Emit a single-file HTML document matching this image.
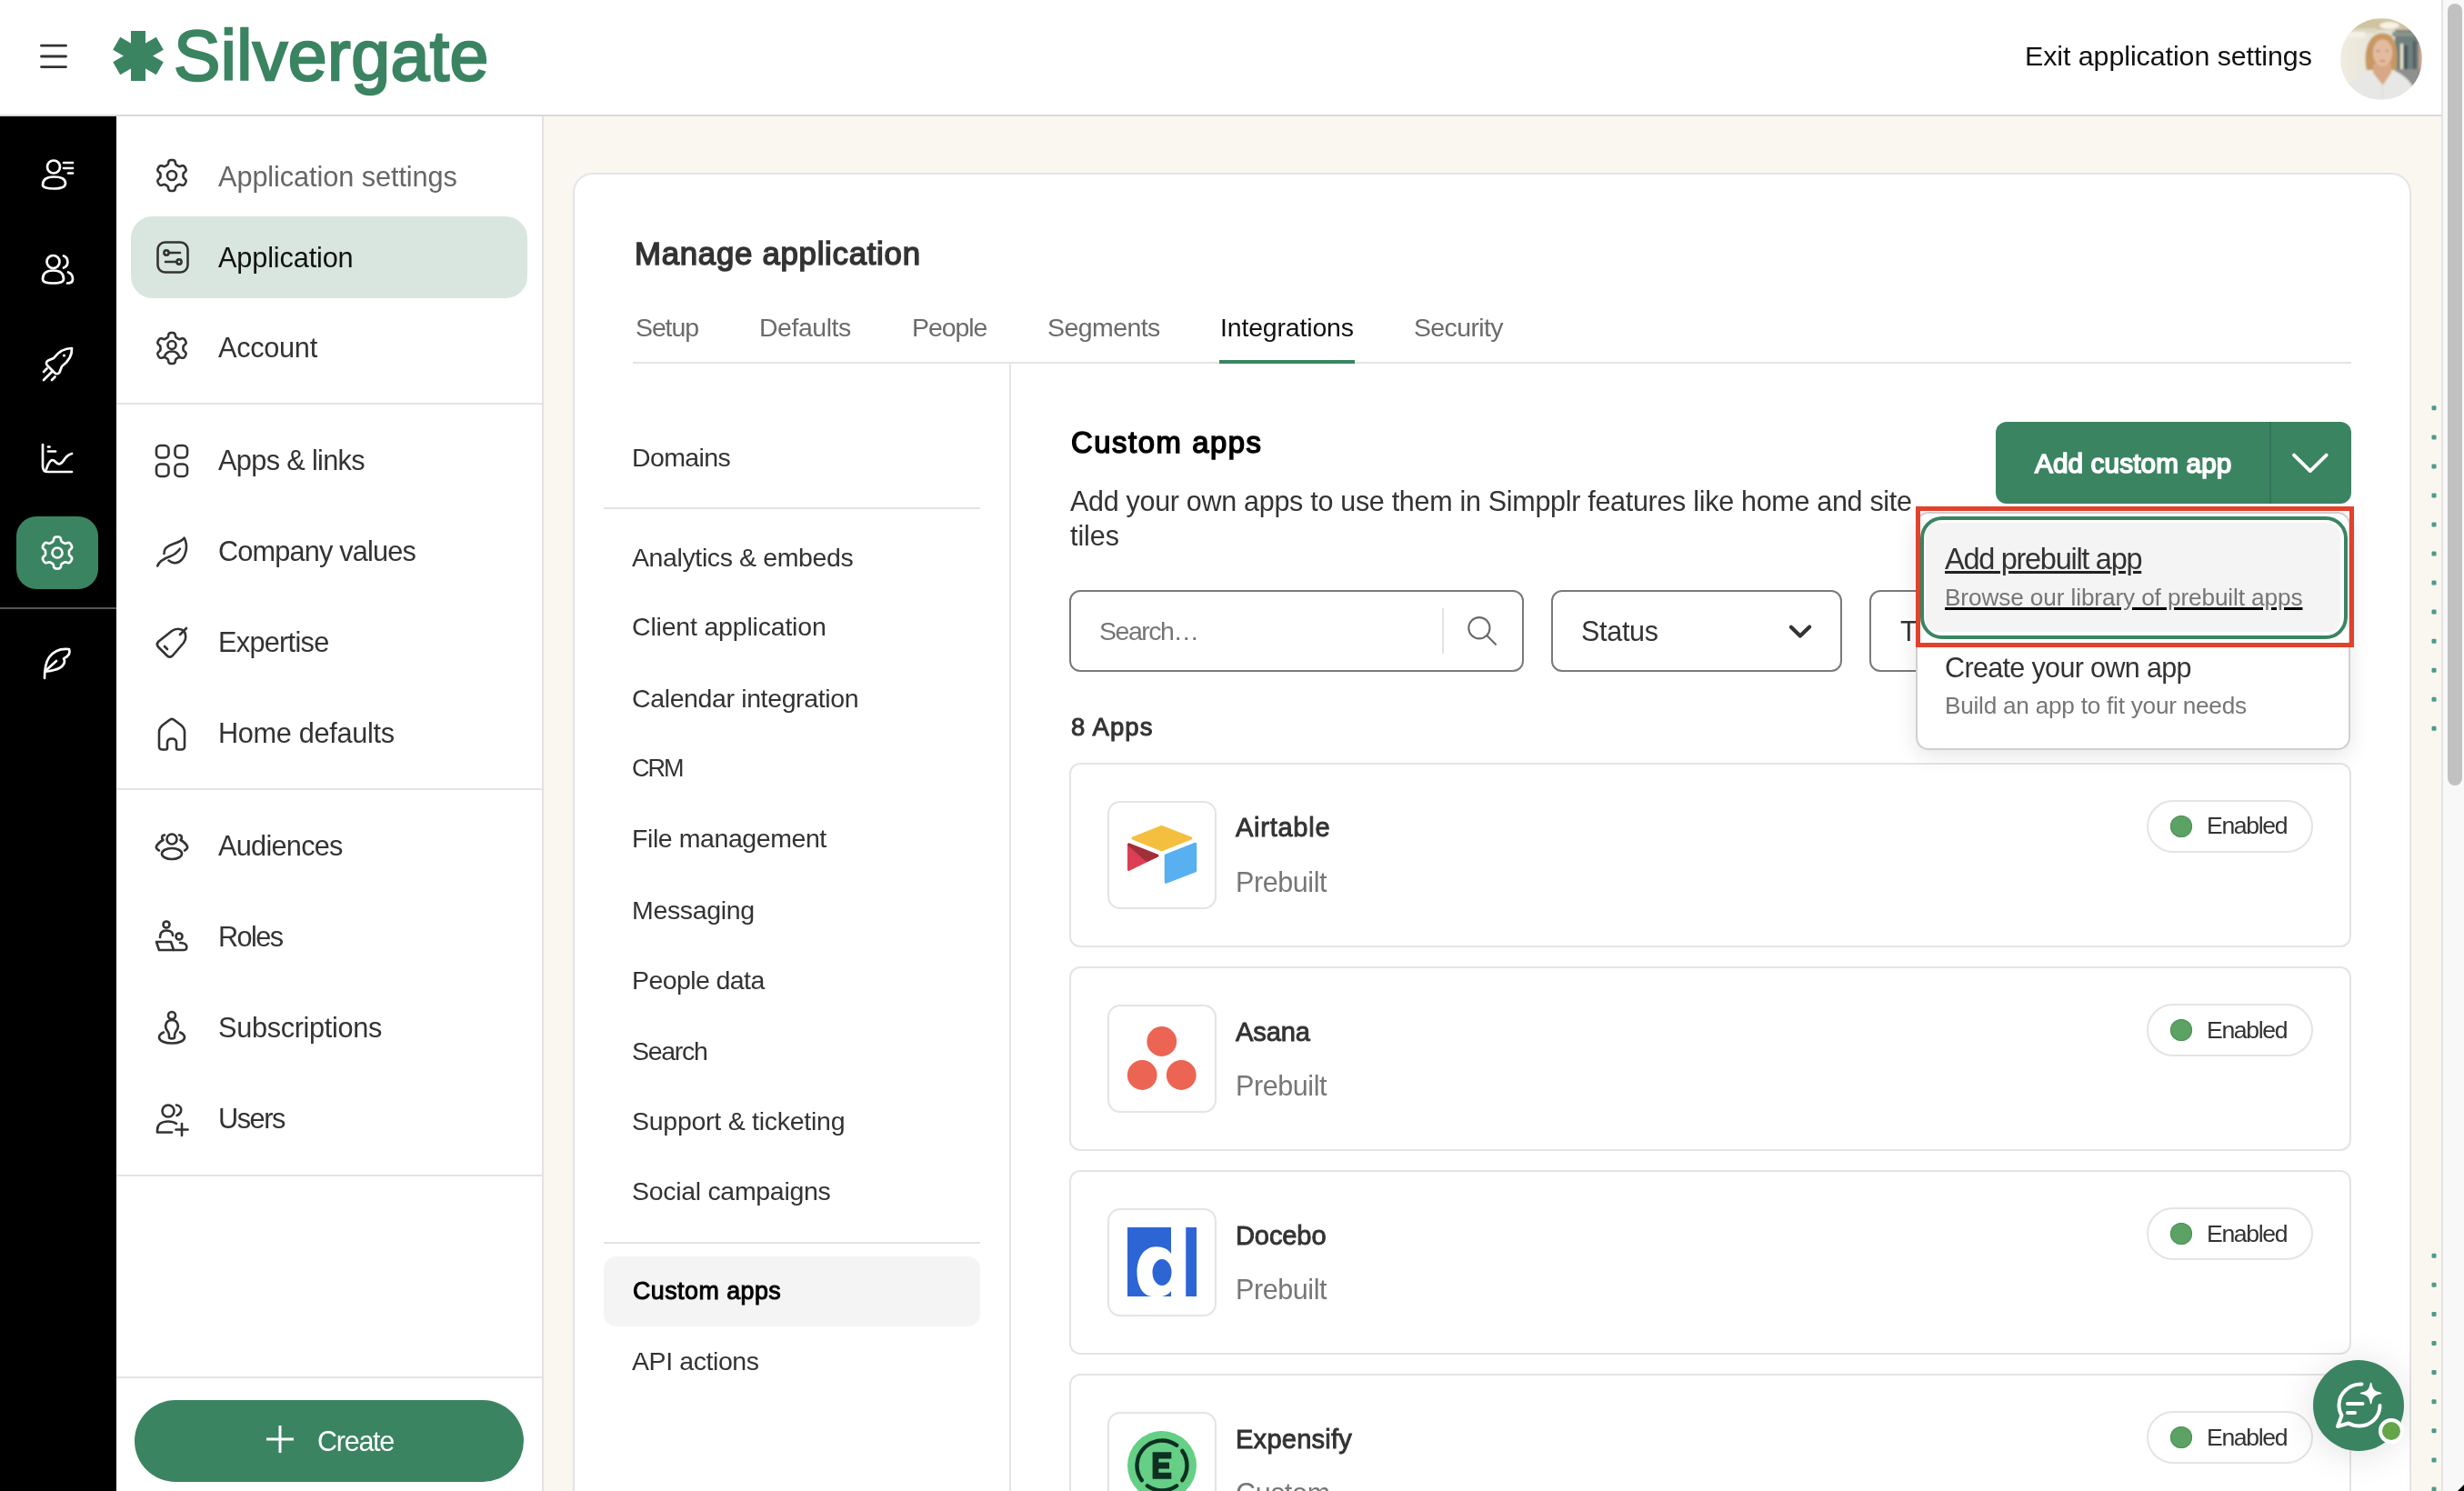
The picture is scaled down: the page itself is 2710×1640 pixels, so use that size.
<!DOCTYPE html>
<html><head><meta charset="utf-8"><title>Manage application</title>
<style>
html,body{margin:0;padding:0;width:2710px;height:1640px;overflow:hidden;background:#fff}
body{position:relative;font-family:"Liberation Sans",sans-serif}
.a{position:absolute;display:block}
.t{position:absolute;line-height:1;white-space:nowrap;will-change:transform}
</style></head><body>
<div class="a" style="left:598px;top:128px;width:2087px;height:1512px;background:#f9f7f0"></div>
<div class="a" style="left:0px;top:0px;width:2685px;height:126px;background:#fff"></div>
<div class="a" style="left:0px;top:126px;width:2685px;height:2px;background:#d9d9d9"></div>
<div class="a" style="left:0px;top:128px;width:128px;height:1512px;background:#000"></div>
<div class="a" style="left:128px;top:128px;width:468px;height:1512px;background:#fff"></div>
<div class="a" style="left:596px;top:128px;width:2px;height:1512px;background:#e2e2e2"></div>
<div class="a" style="left:2685px;top:0px;width:2px;height:1640px;background:#e4e4e4"></div>
<div class="a" style="left:2687px;top:0px;width:23px;height:1640px;background:#f8f8f8"></div>
<div class="a" style="left:2692px;top:4px;width:16px;height:860px;background:#c1c1c1;border-radius:8px"></div>
<svg class="a" style="left:40px;top:44px;" width="38" height="36" viewBox="0 0 38 36"><g stroke="#333" stroke-width="2.8" stroke-linecap="round"><line x1="5.5" y1="6.2" x2="32.5" y2="6.2"/><line x1="5.5" y1="18" x2="32.5" y2="18"/><line x1="5.5" y1="29.6" x2="32.5" y2="29.6"/></g></svg>
<svg class="a" style="left:122px;top:32px;" width="60" height="60" viewBox="0 0 60 60"><g fill="#3b8462" transform="translate(30 29.5)"><rect x="-8" y="-27.5" width="16" height="55"/><rect x="-8" y="-27.5" width="16" height="55" transform="rotate(60)"/><rect x="-8" y="-27.5" width="16" height="55" transform="rotate(120)"/></g></svg>
<div class="t " style="left:191.00px;top:23.10px;font-size:77px;color:#3b8462;font-weight:400;letter-spacing:0.433px;-webkit-text-stroke:2.4px #3b8462">Silvergate</div>
<div class="t " style="left:2227.00px;top:46.46px;font-size:30.4px;color:#111;font-weight:400;letter-spacing:-0.071px;">Exit application settings</div>
<svg class="a" style="left:2574px;top:20px" width="90" height="90" viewBox="0 0 90 90">
<defs><clipPath id="avc"><circle cx="45" cy="45" r="45"/></clipPath>
<filter id="avb" x="-5%" y="-5%" width="110%" height="110%"><feGaussianBlur stdDeviation="1.3"/></filter>
<linearGradient id="avl" x1="0" y1="0" x2="1" y2="0"><stop offset="0" stop-color="#efece0"/><stop offset="1" stop-color="#dedbcd"/></linearGradient></defs>
<g clip-path="url(#avc)"><g filter="url(#avb)">
<rect width="90" height="90" fill="url(#avl)"/>
<rect x="0" y="0" width="90" height="13" fill="#cfc3a0"/>
<rect x="0" y="11" width="40" height="5" fill="#ddd6bf"/>
<ellipse cx="54" cy="8" rx="11" ry="4" fill="#f6f3e4"/>
<rect x="5" y="15" width="22" height="6" fill="#f4f2e8"/>
<path d="M60 13 L90 13 L90 90 L60 90Z" fill="#6e7f7e"/>
<rect x="57" y="15" width="33" height="5" fill="#8a9588"/>
<rect x="66" y="28" width="3" height="34" fill="#e8e2c8"/>
<rect x="70" y="30" width="4" height="32" fill="#45575a"/>
<rect x="80" y="25" width="3" height="37" fill="#4b5d61"/>
<rect x="86" y="28" width="4" height="30" fill="#c9a38e"/>
<rect x="60" y="56" width="30" height="20" fill="#8e908d"/>
<path d="M29 57 C25 40 29 17 46 16.5 C61 16.5 64 32 62 57 Z" fill="#c69760"/>
<path d="M36 50 L56 50 L56 60 L46.7 74 L36 60Z" fill="#d8a786"/>
<ellipse cx="46.5" cy="38" rx="10.8" ry="15" fill="#e3bb9f"/>
<path d="M34 36 C33 22 38 17.5 47 17.5 C56 17.5 60 23 59 36 C56.5 27 51 23 45.5 23 C40 23 36 28 34 36Z" fill="#c8995f"/>
<circle cx="41.5" cy="36" r="1.1" fill="#6b6f80"/><circle cx="51.5" cy="36" r="1.1" fill="#6b6f80"/>
<ellipse cx="46.5" cy="47" rx="3.4" ry="1.1" fill="#c78b82"/>
<path d="M6 90 L10 73 C17 66 26 60 33 57.5 L46.7 74 L58 57.5 C66 60 74 66 79 74 L84 90Z" fill="#e7e7e5"/>
<line x1="46.7" y1="74" x2="46.7" y2="90" stroke="#d4d4d2" stroke-width="0.8"/>
</g></g></svg>
<svg class="a" style="left:40px;top:170px;" width="46" height="44" viewBox="0 0 46 44"><g fill="none" stroke="#fff" stroke-width="2.7" stroke-linecap="round"><circle cx="19" cy="13.5" r="7"/><path d="M7 33.5 C7 26 13 24.5 19 24.5 C25 24.5 32 26 32 31.5 C32 36 26 37.5 19 37.5 C12 37.5 7 36 7 33.5Z"/><line x1="30" y1="9" x2="40" y2="9"/><line x1="30" y1="15" x2="40" y2="15"/><line x1="35" y1="20.5" x2="40" y2="20.5"/></g></svg>
<svg class="a" style="left:40px;top:275px;" width="46" height="44" viewBox="0 0 46 44"><g fill="none" stroke="#fff" stroke-width="2.7" stroke-linecap="round"><circle cx="18.5" cy="13" r="7"/><path d="M30 6.5 A7 7 0 0 1 30 19.5"/><path d="M7 32 C7 25 12 22.5 18.5 22.5 C25 22.5 30 25 30 32 C30 35.5 26 36.5 18.5 36.5 C11 36.5 7 35.5 7 32Z"/><path d="M35 24.5 C39 26 40 29 40 32 C40 35 38 36.5 34 36.5"/></g></svg>
<svg class="a" style="left:40px;top:378px;" width="46" height="44" viewBox="0 0 46 44"><g fill="none" stroke="#fff" stroke-width="2.7" stroke-linecap="round" stroke-linejoin="round"><path d="M13 18.5 L19 16 C25 8 31 5 39 5 C39.5 13 36 19 28 25 L25.5 31.5 C24 34 21.5 33.5 20 32 L12 24 C10.5 22.5 10.5 19.5 13 18.5Z"/><circle cx="30.5" cy="13" r="1.6" fill="#fff" stroke="none"/><line x1="8" y1="40" x2="17" y2="31"/><line x1="8" y1="31" x2="11.5" y2="27.5"/><line x1="17" y1="40" x2="20.5" y2="36.5"/></g></svg>
<svg class="a" style="left:40px;top:483px;" width="46" height="44" viewBox="0 0 46 44"><g fill="none" stroke="#fff" stroke-width="2.7" stroke-linecap="round" stroke-linejoin="round"><path d="M7 6 L7 30 C7 34 9 36 13 36 L39 36"/><line x1="13" y1="8.5" x2="14.5" y2="8.5"/><line x1="13" y1="13.5" x2="21" y2="13.5"/><path d="M11 33 C14 24 17 20.5 21 25 C25 29.5 28 27 31 22 C33 19 35 17 39 16"/></g></svg>
<div class="a" style="left:18px;top:568px;width:90px;height:80px;background:#3b8462;border-radius:22px"></div>
<svg class="a" style="left:40px;top:585px;" width="46" height="46" viewBox="0 0 46 46"><path d="M36.00 23.00 L36.00 23.34 L36.00 23.68 L35.99 24.02 L36.00 24.37 L36.03 24.72 L36.10 25.08 L36.27 25.46 L36.58 25.89 L37.09 26.38 L37.73 26.95 L38.35 27.55 L38.80 28.13 L39.03 28.68 L39.09 29.18 L39.04 29.64 L38.92 30.09 L38.76 30.52 L38.58 30.94 L38.38 31.35 L38.16 31.75 L37.92 32.14 L37.67 32.52 L37.39 32.89 L37.10 33.24 L36.77 33.57 L36.39 33.85 L35.93 34.04 L35.35 34.12 L34.62 34.02 L33.78 33.78 L32.97 33.51 L32.29 33.32 L31.76 33.26 L31.35 33.31 L31.00 33.43 L30.68 33.58 L30.38 33.74 L30.09 33.91 L29.79 34.09 L29.50 34.26 L29.20 34.43 L28.91 34.59 L28.61 34.76 L28.32 34.94 L28.03 35.14 L27.75 35.39 L27.50 35.72 L27.29 36.21 L27.11 36.89 L26.95 37.73 L26.74 38.57 L26.45 39.25 L26.10 39.72 L25.70 40.02 L25.27 40.21 L24.82 40.33 L24.37 40.41 L23.92 40.46 L23.46 40.49 L23.00 40.50 L22.54 40.49 L22.08 40.46 L21.63 40.41 L21.18 40.33 L20.73 40.21 L20.30 40.02 L19.90 39.72 L19.55 39.25 L19.26 38.57 L19.05 37.73 L18.89 36.89 L18.71 36.21 L18.50 35.72 L18.25 35.39 L17.97 35.14 L17.68 34.94 L17.39 34.76 L17.09 34.59 L16.80 34.43 L16.50 34.26 L16.21 34.09 L15.91 33.91 L15.62 33.74 L15.32 33.58 L15.00 33.43 L14.65 33.31 L14.24 33.26 L13.71 33.32 L13.03 33.51 L12.22 33.78 L11.38 34.02 L10.65 34.12 L10.07 34.04 L9.61 33.85 L9.23 33.57 L8.90 33.24 L8.61 32.89 L8.33 32.52 L8.08 32.14 L7.84 31.75 L7.62 31.35 L7.42 30.94 L7.24 30.52 L7.08 30.09 L6.96 29.64 L6.91 29.18 L6.97 28.68 L7.20 28.13 L7.65 27.55 L8.27 26.95 L8.91 26.38 L9.42 25.89 L9.73 25.46 L9.90 25.08 L9.97 24.72 L10.00 24.37 L10.01 24.02 L10.00 23.68 L10.00 23.34 L10.00 23.00 L10.00 22.66 L10.00 22.32 L10.01 21.98 L10.00 21.63 L9.97 21.28 L9.90 20.92 L9.73 20.54 L9.42 20.11 L8.91 19.62 L8.27 19.05 L7.65 18.45 L7.20 17.87 L6.97 17.32 L6.91 16.82 L6.96 16.36 L7.08 15.91 L7.24 15.48 L7.42 15.06 L7.62 14.65 L7.84 14.25 L8.08 13.86 L8.33 13.48 L8.61 13.11 L8.90 12.76 L9.23 12.43 L9.61 12.15 L10.07 11.96 L10.65 11.88 L11.38 11.98 L12.22 12.22 L13.03 12.49 L13.71 12.68 L14.24 12.74 L14.65 12.69 L15.00 12.57 L15.32 12.42 L15.62 12.26 L15.91 12.09 L16.21 11.91 L16.50 11.74 L16.80 11.57 L17.09 11.41 L17.39 11.24 L17.68 11.06 L17.97 10.86 L18.25 10.61 L18.50 10.28 L18.71 9.79 L18.89 9.11 L19.05 8.27 L19.26 7.43 L19.55 6.75 L19.90 6.28 L20.30 5.98 L20.73 5.79 L21.18 5.67 L21.63 5.59 L22.08 5.54 L22.54 5.51 L23.00 5.50 L23.46 5.51 L23.92 5.54 L24.37 5.59 L24.82 5.67 L25.27 5.79 L25.70 5.98 L26.10 6.28 L26.45 6.75 L26.74 7.43 L26.95 8.27 L27.11 9.11 L27.29 9.79 L27.50 10.28 L27.75 10.61 L28.03 10.86 L28.32 11.06 L28.61 11.24 L28.91 11.41 L29.20 11.57 L29.50 11.74 L29.79 11.91 L30.09 12.09 L30.38 12.26 L30.68 12.42 L31.00 12.57 L31.35 12.69 L31.76 12.74 L32.29 12.68 L32.97 12.49 L33.78 12.22 L34.62 11.98 L35.35 11.88 L35.93 11.96 L36.39 12.15 L36.77 12.43 L37.10 12.76 L37.39 13.11 L37.67 13.48 L37.92 13.86 L38.16 14.25 L38.38 14.65 L38.58 15.06 L38.76 15.48 L38.92 15.91 L39.04 16.36 L39.09 16.82 L39.03 17.32 L38.80 17.87 L38.35 18.45 L37.73 19.05 L37.09 19.62 L36.58 20.11 L36.27 20.54 L36.10 20.92 L36.03 21.28 L36.00 21.63 L35.99 21.98 L36.00 22.32 L36.00 22.66Z" fill="none" stroke="#fff" stroke-width="2.7" stroke-linejoin="round"/><circle cx="23" cy="23" r="5.5" fill="none" stroke="#fff" stroke-width="2.7"/></svg>
<div class="a" style="left:0px;top:668px;width:128px;height:2px;background:#555"></div>
<svg class="a" style="left:40px;top:707px;" width="46" height="46" viewBox="0 0 46 46"><g fill="none" stroke="#fff" stroke-width="2.7" stroke-linecap="round" stroke-linejoin="round"><path d="M9 39 C9 30 10 22 14 16 C19 9 27 6 36 7 C37.5 11 35.5 15 30 17.5 C32 20 31 25 25 28 C20 30.5 15 31 11 31.5"/><path d="M12 29 L22 20"/></g></svg>
<div class="a" style="left:144px;top:238px;width:436px;height:90px;background:#d8e6df;border-radius:24px"></div>
<svg class="a" style="left:167px;top:171px;" width="44" height="44" viewBox="0 0 44 44"><path d="M34.50 22.00 L34.50 22.33 L34.50 22.65 L34.50 22.98 L34.50 23.31 L34.53 23.65 L34.61 24.00 L34.78 24.37 L35.09 24.78 L35.60 25.27 L36.25 25.82 L36.87 26.41 L37.33 26.98 L37.56 27.51 L37.62 28.00 L37.58 28.45 L37.46 28.89 L37.31 29.30 L37.14 29.71 L36.94 30.11 L36.72 30.50 L36.49 30.88 L36.25 31.25 L35.98 31.61 L35.70 31.95 L35.38 32.26 L35.00 32.53 L34.55 32.72 L33.97 32.78 L33.25 32.68 L32.43 32.43 L31.63 32.15 L30.96 31.95 L30.44 31.88 L30.03 31.92 L29.70 32.03 L29.39 32.17 L29.10 32.33 L28.82 32.49 L28.53 32.66 L28.25 32.83 L27.97 32.99 L27.68 33.15 L27.40 33.31 L27.11 33.48 L26.84 33.68 L26.58 33.92 L26.34 34.25 L26.14 34.73 L25.97 35.41 L25.82 36.25 L25.62 37.09 L25.35 37.76 L25.01 38.23 L24.62 38.53 L24.20 38.72 L23.77 38.84 L23.33 38.91 L22.89 38.96 L22.44 38.99 L22.00 39.00 L21.56 38.99 L21.11 38.96 L20.67 38.91 L20.23 38.84 L19.80 38.72 L19.38 38.53 L18.99 38.23 L18.65 37.76 L18.38 37.09 L18.18 36.25 L18.03 35.41 L17.86 34.73 L17.66 34.25 L17.42 33.92 L17.16 33.68 L16.89 33.48 L16.60 33.31 L16.32 33.15 L16.03 32.99 L15.75 32.83 L15.47 32.66 L15.18 32.49 L14.90 32.33 L14.61 32.17 L14.30 32.03 L13.97 31.92 L13.56 31.88 L13.04 31.95 L12.37 32.15 L11.57 32.43 L10.75 32.68 L10.03 32.78 L9.45 32.72 L9.00 32.53 L8.62 32.26 L8.30 31.95 L8.02 31.61 L7.75 31.25 L7.51 30.88 L7.28 30.50 L7.06 30.11 L6.86 29.71 L6.69 29.30 L6.54 28.89 L6.42 28.45 L6.38 28.00 L6.44 27.51 L6.67 26.98 L7.13 26.41 L7.75 25.82 L8.40 25.27 L8.91 24.78 L9.22 24.37 L9.39 24.00 L9.47 23.65 L9.50 23.31 L9.50 22.98 L9.50 22.65 L9.50 22.33 L9.50 22.00 L9.50 21.67 L9.50 21.35 L9.50 21.02 L9.50 20.69 L9.47 20.35 L9.39 20.00 L9.22 19.63 L8.91 19.22 L8.40 18.73 L7.75 18.18 L7.13 17.59 L6.67 17.02 L6.44 16.49 L6.38 16.00 L6.42 15.55 L6.54 15.11 L6.69 14.70 L6.86 14.29 L7.06 13.89 L7.28 13.50 L7.51 13.12 L7.75 12.75 L8.02 12.39 L8.30 12.05 L8.62 11.74 L9.00 11.47 L9.45 11.28 L10.03 11.22 L10.75 11.32 L11.57 11.57 L12.37 11.85 L13.04 12.05 L13.56 12.12 L13.97 12.08 L14.30 11.97 L14.61 11.83 L14.90 11.67 L15.18 11.51 L15.47 11.34 L15.75 11.17 L16.03 11.01 L16.32 10.85 L16.60 10.69 L16.89 10.52 L17.16 10.32 L17.42 10.08 L17.66 9.75 L17.86 9.27 L18.03 8.59 L18.18 7.75 L18.38 6.91 L18.65 6.24 L18.99 5.77 L19.38 5.47 L19.80 5.28 L20.23 5.16 L20.67 5.09 L21.11 5.04 L21.56 5.01 L22.00 5.00 L22.44 5.01 L22.89 5.04 L23.33 5.09 L23.77 5.16 L24.20 5.28 L24.62 5.47 L25.01 5.77 L25.35 6.24 L25.62 6.91 L25.82 7.75 L25.97 8.59 L26.14 9.27 L26.34 9.75 L26.58 10.08 L26.84 10.32 L27.11 10.52 L27.40 10.69 L27.68 10.85 L27.97 11.01 L28.25 11.17 L28.53 11.34 L28.82 11.51 L29.10 11.67 L29.39 11.83 L29.70 11.97 L30.03 12.08 L30.44 12.12 L30.96 12.05 L31.63 11.85 L32.43 11.57 L33.25 11.32 L33.97 11.22 L34.55 11.28 L35.00 11.47 L35.38 11.74 L35.70 12.05 L35.98 12.39 L36.25 12.75 L36.49 13.12 L36.72 13.50 L36.94 13.89 L37.14 14.29 L37.31 14.70 L37.46 15.11 L37.58 15.55 L37.62 16.00 L37.56 16.49 L37.33 17.02 L36.87 17.59 L36.25 18.18 L35.60 18.73 L35.09 19.22 L34.78 19.63 L34.61 20.00 L34.53 20.35 L34.50 20.69 L34.50 21.02 L34.50 21.35 L34.50 21.67Z" fill="none" stroke="#333" stroke-width="2.6" stroke-linejoin="round"/><circle cx="22" cy="22" r="5" fill="none" stroke="#333" stroke-width="2.6"/></svg>
<div class="t " style="left:240.00px;top:179.71px;font-size:30.7px;color:#666;font-weight:400;letter-spacing:-0.079px;">Application settings</div>
<svg class="a" style="left:167.5px;top:261px;" width="44" height="44" viewBox="0 0 44 44"><g fill="none" stroke="#333" stroke-width="2.6" stroke-linecap="round" stroke-linejoin="round"><rect x="5.5" y="5.5" width="33" height="33" rx="8"/><circle cx="15" cy="17" r="2.6"/><line x1="18" y1="17" x2="30" y2="17"/><circle cx="29" cy="27" r="2.6"/><line x1="14" y1="27" x2="26" y2="27"/></g></svg>
<div class="t " style="left:240.00px;top:269.21px;font-size:30.7px;color:#111;font-weight:400;letter-spacing:-0.145px;">Application</div>
<svg class="a" style="left:167px;top:361px;" width="44" height="44" viewBox="0 0 44 44"><path d="M34.50 22.00 L34.50 22.33 L34.50 22.65 L34.50 22.98 L34.50 23.31 L34.53 23.65 L34.61 24.00 L34.78 24.37 L35.09 24.78 L35.60 25.27 L36.25 25.82 L36.87 26.41 L37.33 26.98 L37.56 27.51 L37.62 28.00 L37.58 28.45 L37.46 28.89 L37.31 29.30 L37.14 29.71 L36.94 30.11 L36.72 30.50 L36.49 30.88 L36.25 31.25 L35.98 31.61 L35.70 31.95 L35.38 32.26 L35.00 32.53 L34.55 32.72 L33.97 32.78 L33.25 32.68 L32.43 32.43 L31.63 32.15 L30.96 31.95 L30.44 31.88 L30.03 31.92 L29.70 32.03 L29.39 32.17 L29.10 32.33 L28.82 32.49 L28.53 32.66 L28.25 32.83 L27.97 32.99 L27.68 33.15 L27.40 33.31 L27.11 33.48 L26.84 33.68 L26.58 33.92 L26.34 34.25 L26.14 34.73 L25.97 35.41 L25.82 36.25 L25.62 37.09 L25.35 37.76 L25.01 38.23 L24.62 38.53 L24.20 38.72 L23.77 38.84 L23.33 38.91 L22.89 38.96 L22.44 38.99 L22.00 39.00 L21.56 38.99 L21.11 38.96 L20.67 38.91 L20.23 38.84 L19.80 38.72 L19.38 38.53 L18.99 38.23 L18.65 37.76 L18.38 37.09 L18.18 36.25 L18.03 35.41 L17.86 34.73 L17.66 34.25 L17.42 33.92 L17.16 33.68 L16.89 33.48 L16.60 33.31 L16.32 33.15 L16.03 32.99 L15.75 32.83 L15.47 32.66 L15.18 32.49 L14.90 32.33 L14.61 32.17 L14.30 32.03 L13.97 31.92 L13.56 31.88 L13.04 31.95 L12.37 32.15 L11.57 32.43 L10.75 32.68 L10.03 32.78 L9.45 32.72 L9.00 32.53 L8.62 32.26 L8.30 31.95 L8.02 31.61 L7.75 31.25 L7.51 30.88 L7.28 30.50 L7.06 30.11 L6.86 29.71 L6.69 29.30 L6.54 28.89 L6.42 28.45 L6.38 28.00 L6.44 27.51 L6.67 26.98 L7.13 26.41 L7.75 25.82 L8.40 25.27 L8.91 24.78 L9.22 24.37 L9.39 24.00 L9.47 23.65 L9.50 23.31 L9.50 22.98 L9.50 22.65 L9.50 22.33 L9.50 22.00 L9.50 21.67 L9.50 21.35 L9.50 21.02 L9.50 20.69 L9.47 20.35 L9.39 20.00 L9.22 19.63 L8.91 19.22 L8.40 18.73 L7.75 18.18 L7.13 17.59 L6.67 17.02 L6.44 16.49 L6.38 16.00 L6.42 15.55 L6.54 15.11 L6.69 14.70 L6.86 14.29 L7.06 13.89 L7.28 13.50 L7.51 13.12 L7.75 12.75 L8.02 12.39 L8.30 12.05 L8.62 11.74 L9.00 11.47 L9.45 11.28 L10.03 11.22 L10.75 11.32 L11.57 11.57 L12.37 11.85 L13.04 12.05 L13.56 12.12 L13.97 12.08 L14.30 11.97 L14.61 11.83 L14.90 11.67 L15.18 11.51 L15.47 11.34 L15.75 11.17 L16.03 11.01 L16.32 10.85 L16.60 10.69 L16.89 10.52 L17.16 10.32 L17.42 10.08 L17.66 9.75 L17.86 9.27 L18.03 8.59 L18.18 7.75 L18.38 6.91 L18.65 6.24 L18.99 5.77 L19.38 5.47 L19.80 5.28 L20.23 5.16 L20.67 5.09 L21.11 5.04 L21.56 5.01 L22.00 5.00 L22.44 5.01 L22.89 5.04 L23.33 5.09 L23.77 5.16 L24.20 5.28 L24.62 5.47 L25.01 5.77 L25.35 6.24 L25.62 6.91 L25.82 7.75 L25.97 8.59 L26.14 9.27 L26.34 9.75 L26.58 10.08 L26.84 10.32 L27.11 10.52 L27.40 10.69 L27.68 10.85 L27.97 11.01 L28.25 11.17 L28.53 11.34 L28.82 11.51 L29.10 11.67 L29.39 11.83 L29.70 11.97 L30.03 12.08 L30.44 12.12 L30.96 12.05 L31.63 11.85 L32.43 11.57 L33.25 11.32 L33.97 11.22 L34.55 11.28 L35.00 11.47 L35.38 11.74 L35.70 12.05 L35.98 12.39 L36.25 12.75 L36.49 13.12 L36.72 13.50 L36.94 13.89 L37.14 14.29 L37.31 14.70 L37.46 15.11 L37.58 15.55 L37.62 16.00 L37.56 16.49 L37.33 17.02 L36.87 17.59 L36.25 18.18 L35.60 18.73 L35.09 19.22 L34.78 19.63 L34.61 20.00 L34.53 20.35 L34.50 20.69 L34.50 21.02 L34.50 21.35 L34.50 21.67Z" fill="none" stroke="#333" stroke-width="2.6" stroke-linejoin="round"/><g fill="none" stroke="#333" stroke-width="2.6" stroke-linecap="round" stroke-linejoin="round"><circle cx="22" cy="18.5" r="4.5"/><path d="M13.5 32 C15 27 18 25.5 22 25.5 C26 25.5 29 27 30.5 32"/></g></svg>
<div class="t " style="left:240.00px;top:368.46px;font-size:30.7px;color:#333;font-weight:400;letter-spacing:-0.283px;">Account</div>
<div class="a" style="left:128px;top:443px;width:468px;height:2px;background:#e4e4e4"></div>
<svg class="a" style="left:167px;top:485px;" width="44" height="44" viewBox="0 0 44 44"><g fill="none" stroke="#333" stroke-width="2.6" stroke-linecap="round" stroke-linejoin="round"><rect x="5" y="5" width="13.5" height="13.5" rx="4.5"/><rect x="25.5" y="5" width="13.5" height="13.5" rx="4.5"/><rect x="5" y="25.5" width="13.5" height="13.5" rx="4.5"/><rect x="25.5" y="25.5" width="13.5" height="13.5" rx="4.5"/></g></svg>
<div class="t " style="left:240.00px;top:492.21px;font-size:30.7px;color:#333;font-weight:400;letter-spacing:-0.655px;">Apps &amp; links</div>
<svg class="a" style="left:167px;top:585px;" width="44" height="44" viewBox="0 0 44 44"><g fill="none" stroke="#333" stroke-width="2.6" stroke-linecap="round" stroke-linejoin="round"><path d="M13.5 24 C13 19 17 15.5 23 13.5 C29 11.5 33.5 10 35.6 6.7 C38 11 38.5 16 37.5 21 C36 29 31 34.5 25 34.2 C22.5 34 20.5 33 18.5 31.5"/><path d="M6.2 37.5 C8 32 13 29.5 20 27 C25 25 28.5 22 30.9 18.7"/></g></svg>
<div class="t " style="left:240.00px;top:592.21px;font-size:30.7px;color:#333;font-weight:400;letter-spacing:-0.819px;">Company values</div>
<svg class="a" style="left:167px;top:685px;" width="44" height="44" viewBox="0 0 44 44"><g fill="none" stroke="#333" stroke-width="2.6" stroke-linecap="round" stroke-linejoin="round"><path d="M22 9 C26 6 32 6 35 9 C38 12 38 18 35 22 L23 36 C21 38 18.5 38 16.5 36 L7.5 27 C5.5 25 5.5 22.5 7.5 20.5Z"/><line x1="14" y1="26" x2="17" y2="29"/><line x1="31" y1="13" x2="38" y2="6"/></g></svg>
<div class="t " style="left:240.00px;top:692.21px;font-size:30.7px;color:#333;font-weight:400;letter-spacing:-0.713px;">Expertise</div>
<svg class="a" style="left:167px;top:785px;" width="44" height="44" viewBox="0 0 44 44"><g fill="none" stroke="#333" stroke-width="2.6" stroke-linecap="round" stroke-linejoin="round"><path d="M8 36 L8 20 C8 17 9 15 12 12.5 L20 6.5 C21.5 5.5 22.5 5.5 24 6.5 L32 12.5 C35 15 36 17 36 20 L36 36 C36 39 35 39.5 32 39.5 L29 39.5 C27.5 39.5 27 39 27 37.5 L27 32 C27 29 25 27.5 22 27.5 C19 27.5 17 29 17 32 L17 37.5 C17 39 16.5 39.5 15 39.5 L12 39.5 C9 39.5 8 39 8 36Z"/></g></svg>
<div class="t " style="left:240.00px;top:792.21px;font-size:30.7px;color:#333;font-weight:400;letter-spacing:-0.308px;">Home defaults</div>
<div class="a" style="left:128px;top:867px;width:468px;height:2px;background:#e4e4e4"></div>
<svg class="a" style="left:167px;top:909px;" width="44" height="44" viewBox="0 0 44 44"><g fill="none" stroke="#333" stroke-width="2.6" stroke-linecap="round" stroke-linejoin="round"><circle cx="22" cy="14" r="5.5"/><path d="M14 9.5 C11 9.5 10 13 12.5 15 C9 17 6 19.5 5 22 C4.5 23.5 6 25.5 8 26.5"/><path d="M30 9.5 C33 9.5 34 13 31.5 15 C35 17 38 19.5 39 22 C39.5 23.5 38 25.5 36 26.5"/><ellipse cx="22" cy="30" rx="11" ry="6"/></g></svg>
<div class="t " style="left:240.00px;top:915.96px;font-size:30.7px;color:#333;font-weight:400;letter-spacing:-0.731px;">Audiences</div>
<svg class="a" style="left:167px;top:1009px;" width="44" height="44" viewBox="0 0 44 44"><g fill="none" stroke="#333" stroke-width="2.6" stroke-linecap="round" stroke-linejoin="round"><circle cx="16" cy="8" r="3.5"/><path d="M9 22 C9 16 12 14.5 16 14.5 C20 14.5 23 16 23 20"/><circle cx="30" cy="21" r="3.5"/><path d="M5 27 L21 27 L24 36 L8 36Z"/><path d="M24 36 L35 36 C38 36 39 34 38 31 C37 29 34 28 31 28"/></g></svg>
<div class="t " style="left:240.00px;top:1015.96px;font-size:30.7px;color:#333;font-weight:400;letter-spacing:-1.562px;">Roles</div>
<svg class="a" style="left:167px;top:1109px;" width="44" height="44" viewBox="0 0 44 44"><g fill="none" stroke="#333" stroke-width="2.6" stroke-linecap="round" stroke-linejoin="round"><circle cx="22" cy="8" r="4"/><path d="M22 13 C16 13 14.5 18 15.5 22 C16.5 25 19 26 19 30 L19 32 C19 34 25 34 25 32 L25 30 C25 26 27.5 25 28.5 22 C29.5 18 28 13 22 13Z"/><path d="M13 26.5 C9.5 28 8 30 8 32 C8 36 14.5 38.5 22 38.5 C29.5 38.5 36 36 36 32 C36 30 34.5 28 31 26.5"/></g></svg>
<div class="t " style="left:240.00px;top:1115.96px;font-size:30.7px;color:#333;font-weight:400;letter-spacing:-0.317px;">Subscriptions</div>
<svg class="a" style="left:167px;top:1209px;" width="44" height="44" viewBox="0 0 44 44"><g fill="none" stroke="#333" stroke-width="2.6" stroke-linecap="round" stroke-linejoin="round"><circle cx="18" cy="13" r="6.5"/><path d="M27 6.5 C31 7 33 10 32 13.5 C31 16 29.5 17.5 27.5 18"/><path d="M6 36.5 L6 34 C6 27.5 11 24.5 18 24.5 C22 24.5 25 25.5 27 27 M6 36.5 L22 36.5"/><line x1="33" y1="27" x2="33" y2="40"/><line x1="26.5" y1="33.5" x2="39.5" y2="33.5"/></g></svg>
<div class="t " style="left:240.00px;top:1215.96px;font-size:30.7px;color:#333;font-weight:400;letter-spacing:-1.475px;">Users</div>
<div class="a" style="left:128px;top:1292px;width:468px;height:2px;background:#e4e4e4"></div>
<div class="a" style="left:128px;top:1514px;width:468px;height:2px;background:#e4e4e4"></div>
<div class="a" style="left:148px;top:1540px;width:428px;height:90px;background:#3b8462;border-radius:45px"></div>
<svg class="a" style="left:290px;top:1565px;" width="36" height="36" viewBox="0 0 36 36"><g stroke="#fff" stroke-width="3" stroke-linecap="butt"><line x1="18" y1="3" x2="18" y2="33"/><line x1="3" y1="18" x2="33" y2="18"/></g></svg>
<div class="t " style="left:349.40px;top:1570.38px;font-size:30.5px;color:#fff;font-weight:400;letter-spacing:-1.250px;">Create</div>
<div class="a" style="left:630px;top:190px;width:2022px;height:1600px;background:#fff;border:2px solid #e4e4e4;border-radius:22px;box-sizing:border-box"></div>
<div class="t " style="left:697.75px;top:262.18px;font-size:34.8px;color:#333;font-weight:400;letter-spacing:0.718px;-webkit-text-stroke:1.5px #333;">Manage application</div>
<div class="t " style="left:698.75px;top:345.57px;font-size:28.5px;color:#6b6b6b;font-weight:400;letter-spacing:-1.125px;">Setup</div>
<div class="t " style="left:835.00px;top:345.57px;font-size:28.5px;color:#6b6b6b;font-weight:400;letter-spacing:-0.471px;">Defaults</div>
<div class="t " style="left:1003.00px;top:345.57px;font-size:28.5px;color:#6b6b6b;font-weight:400;letter-spacing:-1.100px;">People</div>
<div class="t " style="left:1152.00px;top:345.57px;font-size:28.5px;color:#6b6b6b;font-weight:400;letter-spacing:-0.579px;">Segments</div>
<div class="t " style="left:1342.00px;top:345.57px;font-size:28.5px;color:#111;font-weight:400;letter-spacing:-0.177px;">Integrations</div>
<div class="t " style="left:1554.50px;top:345.57px;font-size:28.5px;color:#6b6b6b;font-weight:400;letter-spacing:-0.636px;">Security</div>
<div class="a" style="left:696px;top:398px;width:1890px;height:2px;background:#e4e4e4"></div>
<div class="a" style="left:1341px;top:396px;width:149px;height:4px;background:#3b8462"></div>
<div class="a" style="left:1110px;top:400px;width:2px;height:1240px;background:#e4e4e4"></div>
<div class="t " style="left:695.00px;top:488.57px;font-size:28.5px;color:#333;font-weight:400;letter-spacing:-0.617px;">Domains</div>
<div class="t " style="left:695.00px;top:599.07px;font-size:28.5px;color:#333;font-weight:400;letter-spacing:-0.385px;">Analytics &amp; embeds</div>
<div class="t " style="left:695.00px;top:675.32px;font-size:28.5px;color:#333;font-weight:400;letter-spacing:-0.194px;">Client application</div>
<div class="t " style="left:695.00px;top:753.57px;font-size:28.5px;color:#333;font-weight:400;letter-spacing:-0.376px;">Calendar integration</div>
<div class="t " style="left:695.00px;top:831.59px;font-size:27.0px;color:#333;font-weight:400;letter-spacing:-2.000px;">CRM</div>
<div class="t " style="left:695.00px;top:908.32px;font-size:28.5px;color:#333;font-weight:400;letter-spacing:-0.425px;">File management</div>
<div class="t " style="left:695.00px;top:986.57px;font-size:28.5px;color:#333;font-weight:400;letter-spacing:-0.350px;">Messaging</div>
<div class="t " style="left:695.00px;top:1064.07px;font-size:28.5px;color:#333;font-weight:400;letter-spacing:-0.590px;">People data</div>
<div class="t " style="left:695.00px;top:1141.57px;font-size:28.5px;color:#333;font-weight:400;letter-spacing:-1.310px;">Search</div>
<div class="t " style="left:695.00px;top:1218.57px;font-size:28.5px;color:#333;font-weight:400;letter-spacing:-0.261px;">Support &amp; ticketing</div>
<div class="t " style="left:695.00px;top:1296.07px;font-size:28.5px;color:#333;font-weight:400;letter-spacing:-0.307px;">Social campaigns</div>
<div class="t " style="left:695.00px;top:1482.82px;font-size:28.5px;color:#333;font-weight:400;letter-spacing:-0.415px;">API actions</div>
<div class="a" style="left:664px;top:558px;width:414px;height:2px;background:#e4e4e4"></div>
<div class="a" style="left:664px;top:1366px;width:414px;height:2px;background:#e4e4e4"></div>
<div class="a" style="left:664px;top:1382px;width:414px;height:77px;background:#f4f4f4;border-radius:14px"></div>
<div class="t " style="left:695.50px;top:1407.01px;font-size:26.8px;color:#000;font-weight:400;letter-spacing:0.485px;-webkit-text-stroke:1.0px #000;">Custom apps</div>
<div class="t " style="left:1177.75px;top:470.93px;font-size:32.8px;color:#000;font-weight:400;letter-spacing:1.575px;-webkit-text-stroke:1.5px #000;">Custom apps</div>
<div class="t " style="left:1177.00px;top:535.58px;font-size:30.5px;color:#333;font-weight:400;letter-spacing:-0.299px;">Add your own apps to use them in Simpplr features like home and site</div>
<div class="t " style="left:1177.00px;top:574.38px;font-size:30.5px;color:#333;font-weight:400;letter-spacing:-0.070px;">tiles</div>
<div class="a" style="left:1176px;top:649px;width:500px;height:90px;border:2px solid #7a7a7a;border-radius:12px;box-sizing:border-box;background:#fff"></div>
<div class="t " style="left:1208.75px;top:680.32px;font-size:28.5px;color:#767676;font-weight:400;letter-spacing:-1.467px;">Search…</div>
<div class="a" style="left:1586px;top:669px;width:2px;height:50px;background:#e2e2e2"></div>
<svg class="a" style="left:1605px;top:670px;" width="50" height="50" viewBox="0 0 50 50"><g fill="none" stroke="#6a6a6a" stroke-width="2.1" stroke-linecap="round"><circle cx="21.9" cy="20.75" r="11.6"/><line x1="30.3" y1="29" x2="40" y2="38.8"/></g></svg>
<div class="a" style="left:1706px;top:649px;width:320px;height:90px;border:2px solid #7a7a7a;border-radius:12px;box-sizing:border-box;background:#fff"></div>
<div class="t " style="left:1738.75px;top:678.63px;font-size:30.5px;color:#333;font-weight:400;letter-spacing:-0.300px;">Status</div>
<svg class="a" style="left:1964px;top:684px;" width="32" height="22" viewBox="0 0 32 22"><path d="M5.9 5.8 L15.9 15.6 L26.2 5.6" fill="none" stroke="#333" stroke-width="4.2" stroke-linecap="round" stroke-linejoin="round"/></svg>
<div class="a" style="left:2056px;top:649px;width:300px;height:90px;border:2px solid #7a7a7a;border-radius:12px;box-sizing:border-box;background:#fff"></div>
<div class="t " style="left:2090.00px;top:678.63px;font-size:30.5px;color:#333;font-weight:400;letter-spacing:-0.300px;">Type</div>
<div class="t " style="left:1177.50px;top:785.67px;font-size:27.5px;color:#333;font-weight:400;letter-spacing:1.080px;-webkit-text-stroke:1.0px #333;">8 Apps</div>
<div class="a" style="left:1176px;top:838.75px;width:1410px;height:203px;border:2px solid #e4e4e4;border-radius:12px;box-sizing:border-box;background:#fff"></div>
<div class="a" style="left:1218px;top:880.75px;width:120px;height:119px;border:2px solid #e4e4e4;border-radius:14px;box-sizing:border-box;background:#fff"></div>
<div class="t " style="left:1359.20px;top:896.36px;font-size:29.1px;color:#333;font-weight:400;letter-spacing:0.707px;-webkit-text-stroke:0.9px #333;">Airtable</div>
<div class="t " style="left:1358.75px;top:954.88px;font-size:30.5px;color:#777;font-weight:400;letter-spacing:-0.414px;">Prebuilt</div>
<div class="a" style="left:2361px;top:879.75px;width:183px;height:58px;border:2px solid #e4e4e4;border-radius:30px;box-sizing:border-box;background:#fff"></div>
<div class="a" style="left:2387px;top:897.0px;width:24px;height:24px;background:#5ba264;border-radius:50%;box-shadow:inset 0 0 0 1px #4e9157"></div>
<div class="t " style="left:2426.90px;top:895.43px;font-size:26.6px;color:#333;font-weight:400;letter-spacing:-1.333px;">Enabled</div>
<div class="a" style="left:1176px;top:1063px;width:1410px;height:203px;border:2px solid #e4e4e4;border-radius:12px;box-sizing:border-box;background:#fff"></div>
<div class="a" style="left:1218px;top:1105px;width:120px;height:119px;border:2px solid #e4e4e4;border-radius:14px;box-sizing:border-box;background:#fff"></div>
<div class="t " style="left:1359.20px;top:1120.61px;font-size:29.1px;color:#333;font-weight:400;letter-spacing:-0.113px;-webkit-text-stroke:0.9px #333;">Asana</div>
<div class="t " style="left:1358.75px;top:1179.13px;font-size:30.5px;color:#777;font-weight:400;letter-spacing:-0.414px;">Prebuilt</div>
<div class="a" style="left:2361px;top:1104px;width:183px;height:58px;border:2px solid #e4e4e4;border-radius:30px;box-sizing:border-box;background:#fff"></div>
<div class="a" style="left:2387px;top:1121.25px;width:24px;height:24px;background:#5ba264;border-radius:50%;box-shadow:inset 0 0 0 1px #4e9157"></div>
<div class="t " style="left:2426.90px;top:1119.68px;font-size:26.6px;color:#333;font-weight:400;letter-spacing:-1.333px;">Enabled</div>
<div class="a" style="left:1176px;top:1287px;width:1410px;height:203px;border:2px solid #e4e4e4;border-radius:12px;box-sizing:border-box;background:#fff"></div>
<div class="a" style="left:1218px;top:1329px;width:120px;height:119px;border:2px solid #e4e4e4;border-radius:14px;box-sizing:border-box;background:#fff"></div>
<div class="t " style="left:1359.20px;top:1344.61px;font-size:29.1px;color:#333;font-weight:400;letter-spacing:-0.140px;-webkit-text-stroke:0.9px #333;">Docebo</div>
<div class="t " style="left:1358.75px;top:1403.13px;font-size:30.5px;color:#777;font-weight:400;letter-spacing:-0.414px;">Prebuilt</div>
<div class="a" style="left:2361px;top:1328px;width:183px;height:58px;border:2px solid #e4e4e4;border-radius:30px;box-sizing:border-box;background:#fff"></div>
<div class="a" style="left:2387px;top:1345.25px;width:24px;height:24px;background:#5ba264;border-radius:50%;box-shadow:inset 0 0 0 1px #4e9157"></div>
<div class="t " style="left:2426.90px;top:1343.68px;font-size:26.6px;color:#333;font-weight:400;letter-spacing:-1.333px;">Enabled</div>
<div class="a" style="left:1176px;top:1511px;width:1410px;height:203px;border:2px solid #e4e4e4;border-radius:12px;box-sizing:border-box;background:#fff"></div>
<div class="a" style="left:1218px;top:1553px;width:120px;height:119px;border:2px solid #e4e4e4;border-radius:14px;box-sizing:border-box;background:#fff"></div>
<div class="t " style="left:1359.20px;top:1568.61px;font-size:29.1px;color:#333;font-weight:400;letter-spacing:0.212px;-webkit-text-stroke:0.9px #333;">Expensify</div>
<div class="t " style="left:1358.75px;top:1627.13px;font-size:30.5px;color:#777;font-weight:400;letter-spacing:-0.170px;">Custom</div>
<div class="a" style="left:2361px;top:1552px;width:183px;height:58px;border:2px solid #e4e4e4;border-radius:30px;box-sizing:border-box;background:#fff"></div>
<div class="a" style="left:2387px;top:1569.25px;width:24px;height:24px;background:#5ba264;border-radius:50%;box-shadow:inset 0 0 0 1px #4e9157"></div>
<div class="t " style="left:2426.90px;top:1567.68px;font-size:26.6px;color:#333;font-weight:400;letter-spacing:-1.333px;">Enabled</div>
<svg class="a" style="left:1236px;top:904px;" width="84" height="72" viewBox="0 0 84 72"><g stroke-linejoin="round" stroke-width="3"><path d="M10 18 L41.5 5.5 L73.75 18 L41.5 30.75Z" fill="#f4bf3f" stroke="#f4bf3f"/><path d="M5.5 25 L36.75 37.25 L5.5 52.5Z" fill="#dc3f54" stroke="#dc3f54"/><path d="M5.5 25 L36.75 37.25 L25.25 42.5Z" fill="#a0303a" stroke="#a0303a"/><path d="M46.25 37 L78.75 24.25 L78.75 53.75 L46.25 66.25Z" fill="#58b0f0" stroke="#58b0f0"/></g></svg>
<svg class="a" style="left:1236px;top:1124px;" width="84" height="84" viewBox="0 0 84 84"><g fill="#ec6453"><circle cx="41.75" cy="21.5" r="16.4"/><circle cx="20.25" cy="58.5" r="16.4"/><circle cx="63.25" cy="58.5" r="16.4"/></g></svg>
<svg class="a" style="left:1240px;top:1350px;" width="76" height="76" viewBox="0 0 76 76"><rect width="76" height="76" fill="#2d65d4"/><path d="M48 0 L64.5 0 L64.5 76 L48 76 L48 70 C45 74 40 76 35 76 L28 76 C17 76 10.5 64 10.5 49.5 C10.5 35 17 21.25 32 21.25 C39 21.25 45 24 48 29Z" fill="#fff"/><ellipse cx="38" cy="49.5" rx="10.5" ry="14.5" fill="#2d65d4"/><rect x="64.5" y="0" width="11.5" height="76" fill="#2d65d4"/></svg>
<svg class="a" style="left:1240px;top:1574px;" width="76" height="76" viewBox="0 0 76 76"><circle cx="38" cy="38" r="38" fill="#64cf85"/><g fill="none" stroke="#0e2f22" stroke-width="4.4" stroke-linecap="round"><path d="M15.75 54.16 A27.5 27.5 0 0 1 54.16 15.75"/><path d="M60.25 21.84 A27.5 27.5 0 0 1 60.25 54.16"/><path d="M54.16 60.25 A27.5 27.5 0 0 1 21.84 60.25"/></g><path d="M27.6 23.2 H48.3 V30.5 H34.3 V34.5 H46 V41.5 H34.3 V45.7 H48.3 V52.7 H27.6 Z" fill="#0e2f22"/></svg>
<div class="a" style="left:2195px;top:464px;width:391px;height:90px;background:#3b8462;border-radius:12px"></div>
<div class="a" style="left:2496px;top:464px;width:2px;height:90px;background:#33745a"></div>
<div class="t " style="left:2238.30px;top:494.75px;font-size:29.7px;color:#fff;font-weight:400;letter-spacing:0.135px;-webkit-text-stroke:1.6px #fff;">Add custom app</div>
<svg class="a" style="left:2516px;top:492px;" width="50" height="36" viewBox="0 0 50 36"><path d="M7.1 8.6 L24.8 26.1 L42.6 8.6" fill="none" stroke="#fff" stroke-width="3.8" stroke-linecap="round" stroke-linejoin="round"/></svg>
<div class="a" style="left:2107px;top:563px;width:478px;height:262px;background:#fff;border:2px solid #cfcfcf;border-radius:14px;box-sizing:border-box;box-shadow:0 6px 24px rgba(0,0,0,0.10)"></div>
<div class="a" style="left:2112px;top:568px;width:470px;height:135px;border:4px solid #3b8462;border-radius:24px;box-sizing:border-box"></div>
<div class="a" style="left:2117.5px;top:575px;width:456px;height:120px;background:#f4f4f4;border-radius:14px"></div>
<div class="t " style="left:2138.75px;top:599.43px;font-size:32.5px;color:#333;font-weight:400;letter-spacing:-1.280px;text-decoration:underline;text-decoration-thickness:2.5px;text-underline-offset:1.5px;text-decoration-color:#222">Add prebuilt app</div>
<div class="t " style="left:2138.75px;top:644.02px;font-size:26.2px;color:#767676;font-weight:400;letter-spacing:-0.112px;text-decoration:underline;text-decoration-thickness:2.5px;text-underline-offset:1.5px;text-decoration-color:#000">Browse our library of prebuilt apps</div>
<div class="t " style="left:2139.00px;top:719.38px;font-size:30.5px;color:#333;font-weight:400;letter-spacing:-0.647px;">Create your own app</div>
<div class="t " style="left:2139.00px;top:763.02px;font-size:26.2px;color:#767676;font-weight:400;letter-spacing:-0.245px;">Build an app to fit your needs</div>
<div class="a" style="left:2107px;top:557px;width:482px;height:155px;border:5px solid #e2412b;box-sizing:border-box"></div>
<div class="a" style="left:2544px;top:1496px;width:100px;height:100px;background:#3b8462;border-radius:50%;box-shadow:0 4px 40px rgba(0,0,0,0.12)"></div>
<svg class="a" style="left:2544px;top:1496px;" width="100" height="100" viewBox="0 0 100 100"><g fill="none" stroke="#fff" stroke-width="4" stroke-linecap="round" stroke-linejoin="round"><path d="M53.5 26.5 C40 26 28.5 36.5 28.5 49.5 C28.5 54 29.5 57.5 31.5 61 L27 73 L39 69.5 C42.5 71.5 46.5 72.5 51 72.5 C63.5 72.5 73.5 62.5 73.5 50"/><line x1="38" y1="48" x2="54.5" y2="48"/><line x1="38" y1="58" x2="46" y2="58"/></g><path d="M63.6 25.5 C64.8 32.5 66.5 35 74.6 36.5 C66.5 38 64.8 40.5 63.6 47.5 C62.4 40.5 60.7 38 52.6 36.5 C60.7 35 62.4 32.5 63.6 25.5Z" fill="#fff" stroke="#fff" stroke-width="1.5" stroke-linejoin="round"/></svg>
<div class="a" style="left:2616px;top:1560px;width:28px;height:28px;background:#64a54a;border:4px solid #fff;border-radius:50%;box-sizing:border-box"></div>
<div class="a" style="left:2652px;top:128px;width:33px;height:1512px;background:#f9f7f0"></div>
<svg class="a" style="left:2652px;top:128px;" width="33" height="1512" viewBox="0 0 33 1512"><rect x="22.5" y="318.3" width="5" height="5" rx="1.2" fill="#4b9b89"/><rect x="22.5" y="350.4" width="5" height="5" rx="1.2" fill="#4b9b89"/><rect x="22.5" y="382.4" width="5" height="5" rx="1.2" fill="#4b9b89"/><rect x="22.5" y="414.4" width="5" height="5" rx="1.2" fill="#4b9b89"/><rect x="22.5" y="446.5" width="5" height="5" rx="1.2" fill="#4b9b89"/><rect x="22.5" y="478.5" width="5" height="5" rx="1.2" fill="#4b9b89"/><rect x="22.5" y="510.6" width="5" height="5" rx="1.2" fill="#4b9b89"/><rect x="22.5" y="542.6" width="5" height="5" rx="1.2" fill="#4b9b89"/><rect x="22.5" y="574.7" width="5" height="5" rx="1.2" fill="#4b9b89"/><rect x="22.5" y="606.7" width="5" height="5" rx="1.2" fill="#4b9b89"/><rect x="22.5" y="638.8" width="5" height="5" rx="1.2" fill="#4b9b89"/><rect x="22.5" y="670.8" width="5" height="5" rx="1.2" fill="#4b9b89"/><rect x="22.5" y="1250.7" width="5" height="5" rx="1.2" fill="#4b9b89"/><rect x="22.5" y="1282.8" width="5" height="5" rx="1.2" fill="#4b9b89"/><rect x="22.5" y="1314.9" width="5" height="5" rx="1.2" fill="#4b9b89"/><rect x="22.5" y="1347.0" width="5" height="5" rx="1.2" fill="#4b9b89"/><rect x="22.5" y="1379.1" width="5" height="5" rx="1.2" fill="#4b9b89"/><rect x="22.5" y="1411.2" width="5" height="5" rx="1.2" fill="#4b9b89"/><rect x="22.5" y="1443.3" width="5" height="5" rx="1.2" fill="#4b9b89"/><rect x="22.5" y="1475.4" width="5" height="5" rx="1.2" fill="#4b9b89"/><rect x="22.5" y="1507.5" width="5" height="5" rx="1.2" fill="#4b9b89"/></svg>
<svg class="a" style="left:2700px;top:1630px;" width="10" height="10" viewBox="0 0 10 10"><path d="M10 3 L10 10 L3 10 Z" fill="#000"/></svg>
</body></html>
